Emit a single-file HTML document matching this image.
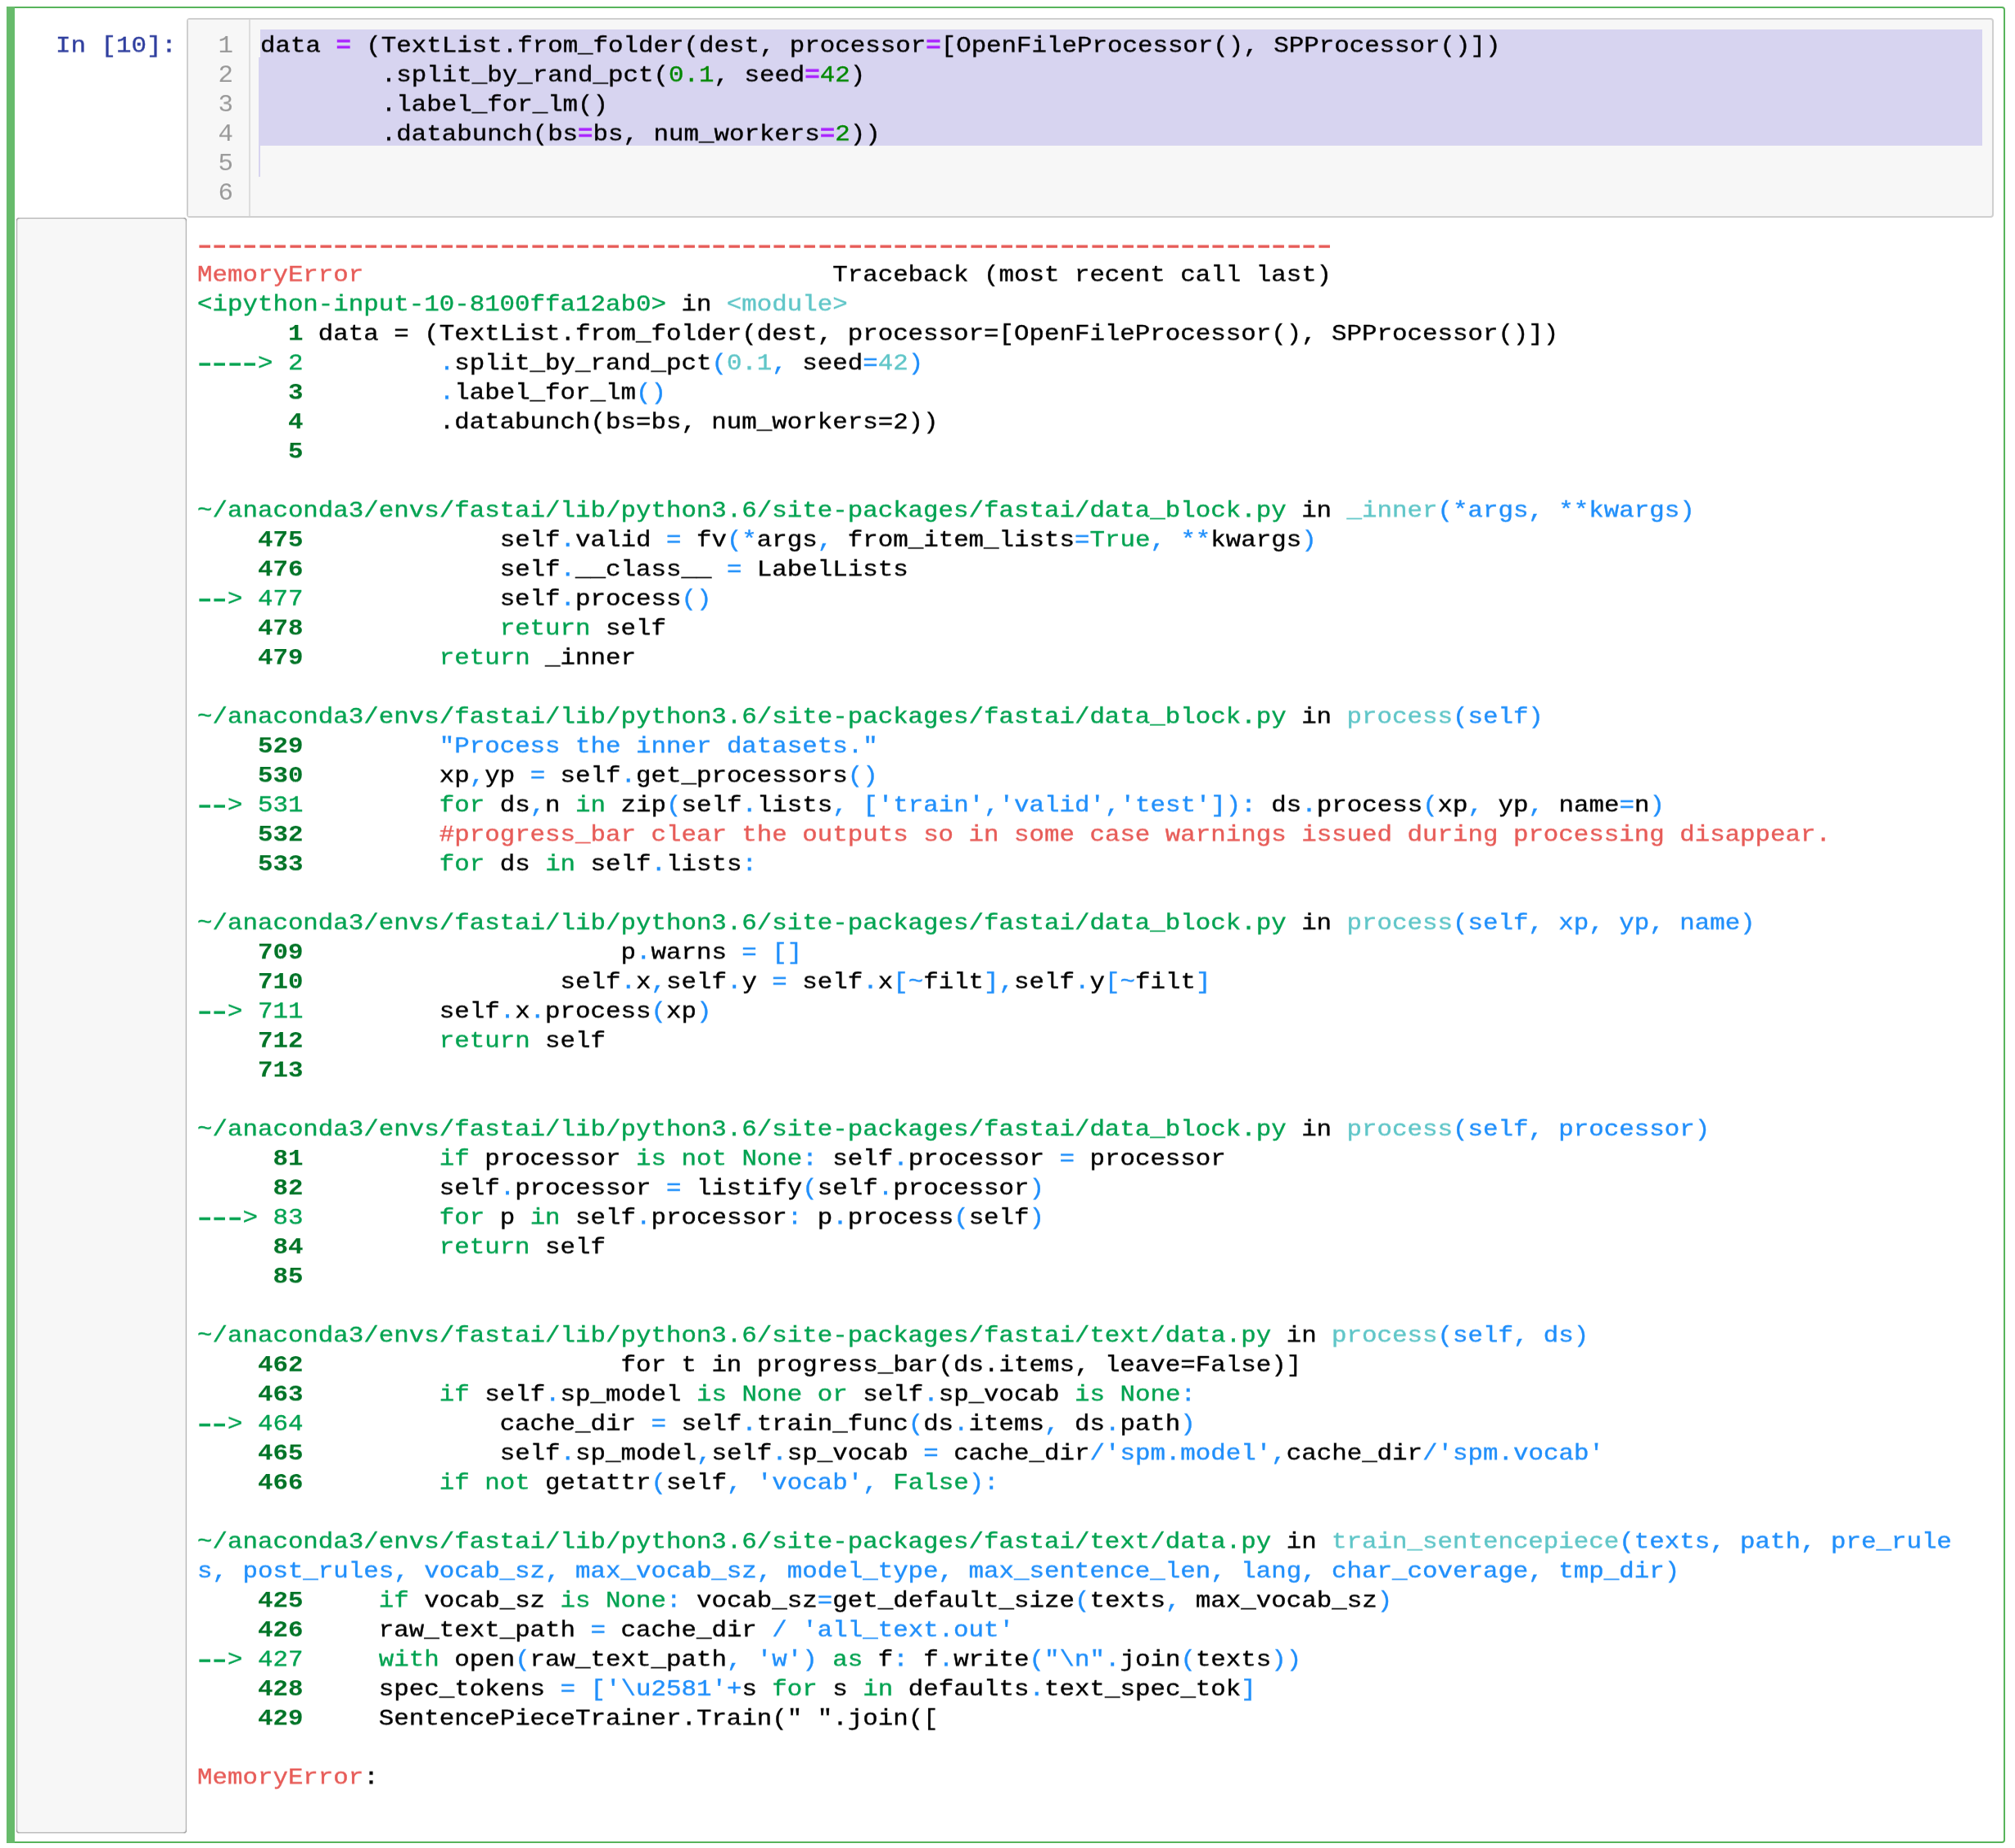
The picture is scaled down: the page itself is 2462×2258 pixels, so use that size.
<!DOCTYPE html>
<html lang="en">
<head>
<meta charset="utf-8">
<title>Notebook cell</title>
<style>
html,body{margin:0;padding:0;background:#fff}
body{width:2462px;height:2258px;position:relative;overflow:hidden;font-family:"Liberation Mono",monospace}
.cell{position:absolute;left:8px;top:8px;width:2442px;height:2244px;box-sizing:border-box;border:2px solid #58B45C;border-radius:4px;background:#fff}
.bar{position:absolute;left:8px;top:8px;width:10px;height:2244px;background:#67BB6B}
.inarea{position:absolute;left:228px;top:22px;width:2208px;height:244px;box-sizing:border-box;border:2px solid #cfcfcf;border-radius:4px;background:#f7f7f7}
.gutter{position:absolute;left:230px;top:24px;width:74px;height:240px;border-right:2px solid #ddd;background:#f7f7f7}
.sel{position:absolute;background:#d7d4f0}
pre{margin:0;padding:0;position:absolute;font-family:"Liberation Mono",monospace;font-size:30.8px;line-height:41px;transform:scaleY(0.878049);transform-origin:0 0;will-change:transform;color:#000;white-space:pre;font-variant-ligatures:none;-webkit-text-stroke:0.4px currentColor}
.prompt{left:68.3px;top:37.8px;color:#303F9F}
.code{left:317.7px;top:37.8px}
.out{left:241.1px;top:282.1px;width:2152px;white-space:pre-wrap;word-break:break-all}
.ln{position:absolute;left:230px;width:calc(285px - 230px);text-align:right;font-family:"Liberation Mono",monospace;font-size:30.8px;line-height:36px;height:36px;color:#999;transform:scaleY(0.95);transform-origin:0 26.2px;will-change:transform}
.overlay{position:absolute;left:20px;top:266px;width:208px;height:1974px;box-sizing:border-box;background:#f7f7f7;border-radius:4px;box-shadow:inset 0 0 2px #000,inset 0 0 1px rgba(0,0,0,.35)}
.r{color:#E75C58}.g{color:#00A250}.G{color:#007427;font-weight:bold;-webkit-text-stroke:0.1px currentColor}.c{color:#60C6C8}.b{color:#208FFB}
i{font-style:normal}
.d{display:inline-block;-webkit-text-stroke:1.6px currentColor;transform:translateY(1px) scaleX(1.35)}
.o{color:#AA22FF;font-weight:bold}.n{color:#008800}
</style>
</head>
<body>
<div class="cell"></div>
<div class="bar"></div>
<div class="inarea"></div>
<div class="gutter"></div>
<div class="sel" style="left:318px;top:36px;width:2104px;height:34px"></div>
<div class="sel" style="left:316px;top:70px;width:2106px;height:108px"></div>
<div class="sel" style="left:316px;top:178px;width:2px;height:38px"></div>
<div class="ln" style="top:37.5px">1</div><div class="ln" style="top:73.5px">2</div><div class="ln" style="top:109.5px">3</div><div class="ln" style="top:145.5px">4</div><div class="ln" style="top:181.5px">5</div><div class="ln" style="top:217.5px">6</div>
<pre class="prompt">In [10]:</pre>
<pre class="code">data <span class="o">=</span> (TextList.from_folder(dest, processor<span class="o">=</span>[OpenFileProcessor(), SPProcessor()])
        .split_by_rand_pct(<span class="n">0.1</span>, seed<span class="o">=</span><span class="n">42</span>)
        .label_for_lm()
        .databunch(bs<span class="o">=</span>bs, num_workers<span class="o">=</span><span class="n">2</span>))

</pre>
<div class="overlay"></div>
<pre class="out"><span class="r"><i class="d">-</i><i class="d">-</i><i class="d">-</i><i class="d">-</i><i class="d">-</i><i class="d">-</i><i class="d">-</i><i class="d">-</i><i class="d">-</i><i class="d">-</i><i class="d">-</i><i class="d">-</i><i class="d">-</i><i class="d">-</i><i class="d">-</i><i class="d">-</i><i class="d">-</i><i class="d">-</i><i class="d">-</i><i class="d">-</i><i class="d">-</i><i class="d">-</i><i class="d">-</i><i class="d">-</i><i class="d">-</i><i class="d">-</i><i class="d">-</i><i class="d">-</i><i class="d">-</i><i class="d">-</i><i class="d">-</i><i class="d">-</i><i class="d">-</i><i class="d">-</i><i class="d">-</i><i class="d">-</i><i class="d">-</i><i class="d">-</i><i class="d">-</i><i class="d">-</i><i class="d">-</i><i class="d">-</i><i class="d">-</i><i class="d">-</i><i class="d">-</i><i class="d">-</i><i class="d">-</i><i class="d">-</i><i class="d">-</i><i class="d">-</i><i class="d">-</i><i class="d">-</i><i class="d">-</i><i class="d">-</i><i class="d">-</i><i class="d">-</i><i class="d">-</i><i class="d">-</i><i class="d">-</i><i class="d">-</i><i class="d">-</i><i class="d">-</i><i class="d">-</i><i class="d">-</i><i class="d">-</i><i class="d">-</i><i class="d">-</i><i class="d">-</i><i class="d">-</i><i class="d">-</i><i class="d">-</i><i class="d">-</i><i class="d">-</i><i class="d">-</i><i class="d">-</i></span>
<span class="r">MemoryError</span>                               Traceback (most recent call last)
<span class="g">&lt;ipython-input-10-8100ffa12ab0&gt;</span> in <span class="c">&lt;module&gt;</span>
<span class="G">      1</span> data = (TextList.from_folder(dest, processor=[OpenFileProcessor(), SPProcessor()])
<span class="g"><i class="d">-</i><i class="d">-</i><i class="d">-</i><i class="d">-</i>&gt; 2</span>         <span class="b">.</span>split_by_rand_pct<span class="b">(</span><span class="c">0.1</span><span class="b">,</span> seed<span class="b">=</span><span class="c">42</span><span class="b">)</span>
<span class="G">      3</span>         <span class="b">.</span>label_for_lm<span class="b">()</span>
<span class="G">      4</span>         .databunch(bs=bs, num_workers=2))
<span class="G">      5</span> 

<span class="g">~/anaconda3/envs/fastai/lib/python3.6/site-packages/fastai/data_block.py</span> in <span class="c">_inner</span><span class="b">(*args, **kwargs)</span>
<span class="G">    475</span>             self<span class="b">.</span>valid <span class="b">=</span> fv<span class="b">(*</span>args<span class="b">,</span> from_item_lists<span class="b">=</span><span class="g">True</span><span class="b">,</span> <span class="b">**</span>kwargs<span class="b">)</span>
<span class="G">    476</span>             self<span class="b">.</span>__class__ <span class="b">=</span> LabelLists
<span class="g"><i class="d">-</i><i class="d">-</i>&gt; 477</span>             self<span class="b">.</span>process<span class="b">()</span>
<span class="G">    478</span>             <span class="g">return</span> self
<span class="G">    479</span>         <span class="g">return</span> _inner

<span class="g">~/anaconda3/envs/fastai/lib/python3.6/site-packages/fastai/data_block.py</span> in <span class="c">process</span><span class="b">(self)</span>
<span class="G">    529</span>         <span class="b">"Process the inner datasets."</span>
<span class="G">    530</span>         xp<span class="b">,</span>yp <span class="b">=</span> self<span class="b">.</span>get_processors<span class="b">()</span>
<span class="g"><i class="d">-</i><i class="d">-</i>&gt; 531</span>         <span class="g">for</span> ds<span class="b">,</span>n <span class="g">in</span> zip<span class="b">(</span>self<span class="b">.</span>lists<span class="b">,</span> <span class="b">[</span><span class="b">'train'</span><span class="b">,</span><span class="b">'valid'</span><span class="b">,</span><span class="b">'test'</span><span class="b">]</span><span class="b">)</span><span class="b">:</span> ds<span class="b">.</span>process<span class="b">(</span>xp<span class="b">,</span> yp<span class="b">,</span> name<span class="b">=</span>n<span class="b">)</span>
<span class="G">    532</span>         <span class="r">#progress_bar clear the outputs so in some case warnings issued during processing disappear.</span>
<span class="G">    533</span>         <span class="g">for</span> ds <span class="g">in</span> self<span class="b">.</span>lists<span class="b">:</span>

<span class="g">~/anaconda3/envs/fastai/lib/python3.6/site-packages/fastai/data_block.py</span> in <span class="c">process</span><span class="b">(self, xp, yp, name)</span>
<span class="G">    709</span>                     p<span class="b">.</span>warns <span class="b">=</span> <span class="b">[]</span>
<span class="G">    710</span>                 self<span class="b">.</span>x<span class="b">,</span>self<span class="b">.</span>y <span class="b">=</span> self<span class="b">.</span>x<span class="b">[~</span>filt<span class="b">],</span>self<span class="b">.</span>y<span class="b">[~</span>filt<span class="b">]</span>
<span class="g"><i class="d">-</i><i class="d">-</i>&gt; 711</span>         self<span class="b">.</span>x<span class="b">.</span>process<span class="b">(</span>xp<span class="b">)</span>
<span class="G">    712</span>         <span class="g">return</span> self
<span class="G">    713</span> 

<span class="g">~/anaconda3/envs/fastai/lib/python3.6/site-packages/fastai/data_block.py</span> in <span class="c">process</span><span class="b">(self, processor)</span>
<span class="G">     81</span>         <span class="g">if</span> processor <span class="g">is</span> <span class="g">not</span> <span class="g">None</span><span class="b">:</span> self<span class="b">.</span>processor <span class="b">=</span> processor
<span class="G">     82</span>         self<span class="b">.</span>processor <span class="b">=</span> listify<span class="b">(</span>self<span class="b">.</span>processor<span class="b">)</span>
<span class="g"><i class="d">-</i><i class="d">-</i><i class="d">-</i>&gt; 83</span>         <span class="g">for</span> p <span class="g">in</span> self<span class="b">.</span>processor<span class="b">:</span> p<span class="b">.</span>process<span class="b">(</span>self<span class="b">)</span>
<span class="G">     84</span>         <span class="g">return</span> self
<span class="G">     85</span> 

<span class="g">~/anaconda3/envs/fastai/lib/python3.6/site-packages/fastai/text/data.py</span> in <span class="c">process</span><span class="b">(self, ds)</span>
<span class="G">    462</span>                     for t in progress_bar(ds.items, leave=False)]
<span class="G">    463</span>         <span class="g">if</span> self<span class="b">.</span>sp_model <span class="g">is</span> <span class="g">None</span> <span class="g">or</span> self<span class="b">.</span>sp_vocab <span class="g">is</span> <span class="g">None</span><span class="b">:</span>
<span class="g"><i class="d">-</i><i class="d">-</i>&gt; 464</span>             cache_dir <span class="b">=</span> self<span class="b">.</span>train_func<span class="b">(</span>ds<span class="b">.</span>items<span class="b">,</span> ds<span class="b">.</span>path<span class="b">)</span>
<span class="G">    465</span>             self<span class="b">.</span>sp_model<span class="b">,</span>self<span class="b">.</span>sp_vocab <span class="b">=</span> cache_dir<span class="b">/</span><span class="b">'spm.model'</span><span class="b">,</span>cache_dir<span class="b">/</span><span class="b">'spm.vocab'</span>
<span class="G">    466</span>         <span class="g">if</span> <span class="g">not</span> getattr<span class="b">(</span>self<span class="b">,</span> <span class="b">'vocab'</span><span class="b">,</span> <span class="g">False</span><span class="b">):</span>

<span class="g">~/anaconda3/envs/fastai/lib/python3.6/site-packages/fastai/text/data.py</span> in <span class="c">train_sentencepiece</span><span class="b">(texts, path, pre_rules, post_rules, vocab_sz, max_vocab_sz, model_type, max_sentence_len, lang, char_coverage, tmp_dir)</span>
<span class="G">    425</span>     <span class="g">if</span> vocab_sz <span class="g">is</span> <span class="g">None</span><span class="b">:</span> vocab_sz<span class="b">=</span>get_default_size<span class="b">(</span>texts<span class="b">,</span> max_vocab_sz<span class="b">)</span>
<span class="G">    426</span>     raw_text_path <span class="b">=</span> cache_dir <span class="b">/</span> <span class="b">'all_text.out'</span>
<span class="g"><i class="d">-</i><i class="d">-</i>&gt; 427</span>     <span class="g">with</span> open<span class="b">(</span>raw_text_path<span class="b">,</span> <span class="b">'w'</span><span class="b">)</span> <span class="g">as</span> f<span class="b">:</span> f<span class="b">.</span>write<span class="b">(</span><span class="b">"\n"</span><span class="b">.</span>join<span class="b">(</span>texts<span class="b">))</span>
<span class="G">    428</span>     spec_tokens <span class="b">=</span> <span class="b">[</span><span class="b">'\u2581'</span><span class="b">+</span>s <span class="g">for</span> s <span class="g">in</span> defaults<span class="b">.</span>text_spec_tok<span class="b">]</span>
<span class="G">    429</span>     SentencePieceTrainer.Train(" ".join([

<span class="r">MemoryError</span>:</pre>
</body>
</html>
